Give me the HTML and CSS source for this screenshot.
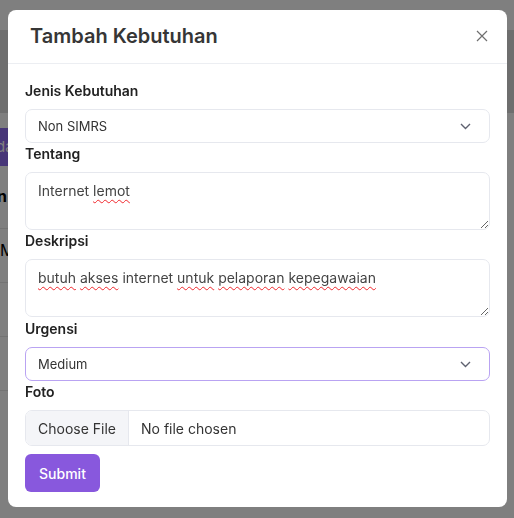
FILE: index.html
```html
<!DOCTYPE html>
<html lang="id">
<head>
<meta charset="utf-8">
<title>Tambah Kebutuhan</title>
<link rel="stylesheet" href="styles.css">
</head>
<body>
<div class="page">
  <div class="topbar"></div>
  <div class="hero"></div>
  <div class="actions"><span class="btn-add">da</span></div>
  <div class="row strong">n</div>
  <div class="row">M</div>
  <div class="row"></div>
  <div class="row"></div>
</div>
<div class="overlay"></div>
<div class="modal">
  <div class="modal-header">
    <h2 class="modal-title">Tambah Kebutuhan</h2>
    <svg class="close" width="12" height="12" viewBox="0 0 12 12"><path d="M1 1L11 11M11 1L1 11" stroke="#6f6f6f" stroke-width="1.2" fill="none"/></svg>
  </div>
  <div class="modal-body">
    <div class="field">
      <div class="label">Jenis Kebutuhan</div>
      <div class="select"><span>Non SIMRS</span><svg width="11" height="7" viewBox="0 0 11 7"><path d="M1 1L5.5 5.5L10 1" stroke="#5f6270" stroke-width="1.4" fill="none"/></svg></div>
    </div>
    <div class="field">
      <div class="label">Tentang</div>
      <div class="textarea">Internet <span class="typo">lemot</span></div>
    </div>
    <div class="field wide">
      <div class="label">Deskripsi</div>
      <div class="textarea"><span class="typo">butuh</span> <span class="typo">akses</span> internet <span class="typo">untuk</span> <span class="typo">pelaporan</span> <span class="typo">kepegawaian</span></div>
    </div>
    <div class="field">
      <div class="label">Urgensi</div>
      <div class="select focus"><span>Medium</span><svg width="11" height="7" viewBox="0 0 11 7"><path d="M1 1L5.5 5.5L10 1" stroke="#5f6270" stroke-width="1.4" fill="none"/></svg></div>
    </div>
    <div class="field">
      <div class="label">Foto</div>
      <div class="file"><span class="file-btn">Choose File</span><span class="file-name">No file chosen</span></div>
    </div>
    <button class="submit">Submit</button>
  </div>
</div>
</body>
</html>
```
FILE: styles.css
```css
* { box-sizing: border-box; }
html, body { margin: 0; padding: 0; }
body {
  font-family: Inter, "Noto Sans", sans-serif;
  background: #fff;
  width: 514px;
  height: 518px;
  overflow: hidden;
}
.page { width: 514px; }
.topbar { height: 30px; background: #fff; }
.hero { height: 83px; background: #ddd; }
.actions { height: 62px; padding-top: 15px; }
.btn-add {
  display: inline-block;
  width: 8px;
  overflow: hidden;
  background: #8f6cf0;
  color: #fff;
  font-size: 15px;
  line-height: 38px;
  text-indent: -4px;
}
.row {
  height: 54px;
  width: 8px;
  overflow: hidden;
  border-bottom: 1px solid #e6e6e6;
  font-size: 16px;
  padding-top: 11px;
  color: #000;
}
.row.strong { font-weight: 700; text-indent: -3px; }
.overlay {
  position: fixed;
  inset: 0;
  background: rgba(0, 0, 0, 0.5);
}
.modal {
  position: fixed;
  left: 8px;
  top: 10px;
  width: 499px;
  background: #fff;
  border-radius: 8px;
  display: flex;
  flex-direction: column;
}
.modal-header {
  flex-shrink: 0;
  height: 54px;
  border-bottom: 1px solid #eceef2;
  display: flex;
  align-items: center;
  justify-content: space-between;
  padding: 0 19px 1px 22px;
}
.modal-title {
  margin: 0;
  font-size: 20px;
  font-weight: 600;
  color: #363636;
}
.close { display: block; }
.modal-body {
  padding: 17px 17px 15px;
  display: flex;
  flex-direction: column;
}
.field { display: flex; flex-direction: column; gap: 8px; margin-bottom: 1px; }
.field.wide { margin-bottom: 2px; }
.label {
  font-size: 14px;
  line-height: 20px;
  font-weight: 600;
  color: #222;
}
.select {
  height: 34px;
  border: 1px solid #e6e8ee;
  border-radius: 7px;
  display: flex;
  align-items: center;
  justify-content: space-between;
  padding: 0 18px 0 12px;
  font-size: 13px;
  color: #333;
}
.select.focus { border-color: #b9a3f2; }
.textarea {
  height: 58px;
  border: 1px solid #e6e8ee;
  border-radius: 7px;
  padding: 8px 12px;
  font-size: 14px;
  line-height: 20px;
  color: #444;
  resize: vertical;
  overflow: auto;
}
.typo {
  text-decoration-line: underline;
  text-decoration-style: wavy;
  text-decoration-color: #f0282d;
  text-decoration-thickness: 1.2px;
  text-decoration-skip-ink: none;
  text-underline-offset: 3px;
}
.file {
  height: 36px;
  border: 1px solid #e6e8ee;
  border-radius: 7px;
  display: flex;
  overflow: hidden;
  font-size: 14px;
  color: #333;
}
.file-btn {
  background: #f4f5f8;
  border-right: 1px solid #e6e8ee;
  display: flex;
  align-items: center;
  padding: 0 12px;
}
.file-name {
  display: flex;
  align-items: center;
  padding: 0 12px;
}
.submit {
  margin-top: 7px;
  align-self: flex-start;
  height: 38px;
  width: 75px;
  border: none;
  border-radius: 6px;
  background: #8858dd;
  color: #fff;
  font-family: inherit;
  font-size: 14px;
  font-weight: 500;
}
```
